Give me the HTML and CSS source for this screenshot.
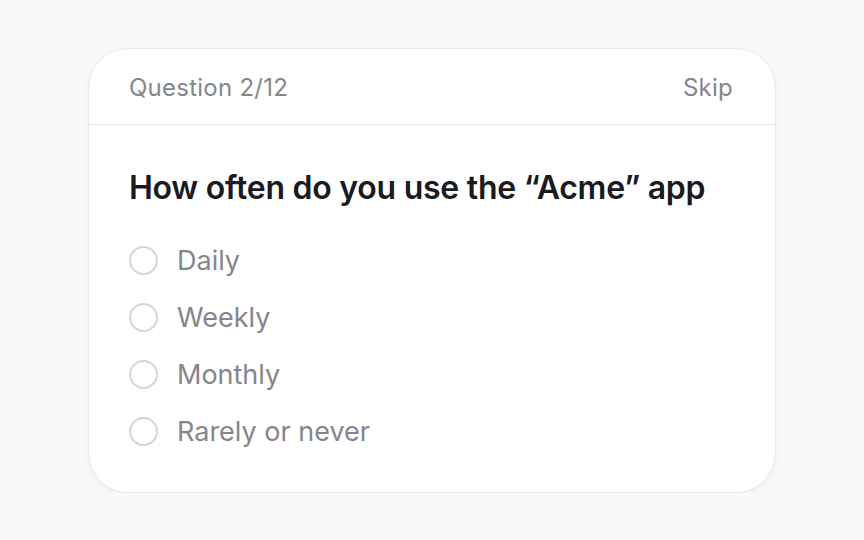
FILE: index.html
```
<!DOCTYPE html>
<html lang="en">
<head>
  <meta charset="UTF-8">
  <title>Survey</title>
  <link rel="stylesheet" href="styles.css">
</head>
<body>

<div class="card">
  <div class="card-head">
    <span class="counter">Question 2/12</span>
    <span class="skip">Skip</span>
  </div>
  <div class="card-body">
    <h2>How often do you use the “Acme” app</h2>
    <div class="options">
      <label class="option"><span class="radio"></span>Daily</label>
      <label class="option"><span class="radio"></span>Weekly</label>
      <label class="option"><span class="radio"></span>Monthly</label>
      <label class="option"><span class="radio"></span>Rarely or never</label>
    </div>
  </div>
</div>

</body>
</html>
```

FILE: styles.css
```
body {
  font-family: Inter, "Noto Sans", sans-serif;
  background-color: #f9f9f9;
  margin: 0;
  padding: 48px 0 0 88px;
}
.card {
  width: 686px;
  height: 443px;
  background: white;
  border: 1px solid #e7e7e9;
  border-radius: 40px;
  box-shadow: 0 2px 6px rgba(0,0,0,0.04);
}
.card-head {
  height: 73px;
  padding: 2px 42px 0 40px;
  display: flex;
  align-items: center;
  justify-content: space-between;
  border-bottom: 1px solid #e7e7e9;
  color: #85858c;
  font-size: 24px;
  letter-spacing: 0.25px;
}
.card-body {
  padding: 43px 40px 0;
}
h2 {
  margin: 0;
  font-size: 32px;
  font-weight: 600;
  color: #1a1a1f;
  letter-spacing: -0.25px;
  line-height: 40px;
}
.options {
  margin-top: 34px;
  display: flex;
  flex-direction: column;
  gap: 21px;
}
.option {
  display: flex;
  align-items: center;
  gap: 19px;
  font-size: 27px;
  color: #85858c;
  height: 36px;
}
.radio {
  width: 25px;
  height: 25px;
  border: 2px solid #d6d6d9;
  border-radius: 50%;
}
```
